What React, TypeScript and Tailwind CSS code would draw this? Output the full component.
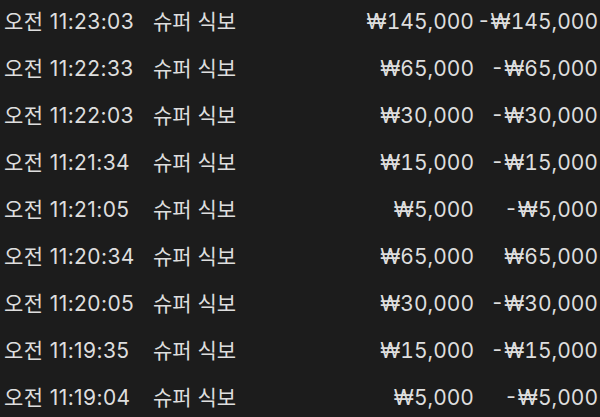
import React from 'react';

interface Row {
  time: string;
  name: string;
  amount: string;
  balance: string;
}

const rows: Row[] = [
  { time: '오전 11:23:03', name: '슈퍼 식보', amount: '₩145,000', balance: '-₩145,000' },
  { time: '오전 11:22:33', name: '슈퍼 식보', amount: '₩65,000', balance: '-₩65,000' },
  { time: '오전 11:22:03', name: '슈퍼 식보', amount: '₩30,000', balance: '-₩30,000' },
  { time: '오전 11:21:34', name: '슈퍼 식보', amount: '₩15,000', balance: '-₩15,000' },
  { time: '오전 11:21:05', name: '슈퍼 식보', amount: '₩5,000', balance: '-₩5,000' },
  { time: '오전 11:20:34', name: '슈퍼 식보', amount: '₩65,000', balance: '₩65,000' },
  { time: '오전 11:20:05', name: '슈퍼 식보', amount: '₩30,000', balance: '-₩30,000' },
  { time: '오전 11:19:35', name: '슈퍼 식보', amount: '₩15,000', balance: '-₩15,000' },
  { time: '오전 11:19:04', name: '슈퍼 식보', amount: '₩5,000', balance: '-₩5,000' },
];

const App: React.FC = () => {
  return (
    <div
      className="w-[600px] h-[417px] overflow-hidden bg-[#1c1c1c] text-[#dedede] text-[21px]"
      style={{ fontFamily: '"Inter", "Noto Sans CJK KR", sans-serif' }}
    >
      <div className="-mt-[2px]">
        {rows.map((row, i) => (
          <div key={i} className="flex items-center h-[47px] pl-[4px] pr-[2px] whitespace-nowrap">
            <div className="w-[149px] tracking-[0.4px]">{row.time}</div>
            <div>{row.name}</div>
            <div className="flex-1 text-right tabular-nums">{row.amount}</div>
            <div className="w-[124px] text-right tabular-nums">{row.balance}</div>
          </div>
        ))}
      </div>
    </div>
  );
};

export default App;
